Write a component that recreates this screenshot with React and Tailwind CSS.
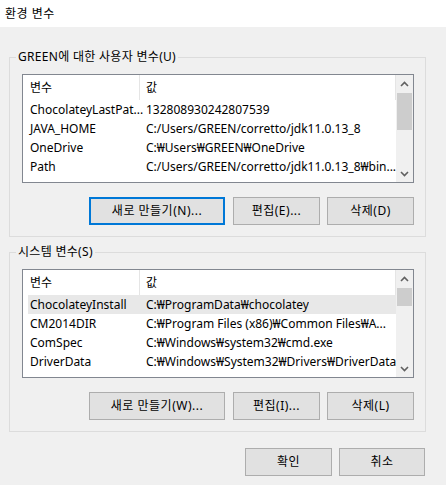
import React from "react";

const userVars = [
  { name: "ChocolateyLastPat...", value: "132808930242807539" },
  { name: "JAVA_HOME", value: "C:/Users/GREEN/corretto/jdk11.0.13_8" },
  { name: "OneDrive", value: "C:₩Users₩GREEN₩OneDrive" },
  { name: "Path", value: "C:/Users/GREEN/corretto/jdk11.0.13_8₩bin..." },
];

const systemVars = [
  { name: "ChocolateyInstall", value: "C:₩ProgramData₩chocolatey" },
  { name: "CM2014DIR", value: "C:₩Program Files (x86)₩Common Files₩A..." },
  { name: "ComSpec", value: "C:₩Windows₩system32₩cmd.exe" },
  { name: "DriverData", value: "C:₩Windows₩System32₩Drivers₩DriverData" },
];

const Chevron = ({ down }) => (
  <svg width="9" height="6" viewBox="0 0 9 6" className={down ? "rotate-180" : ""}>
    <path d="M1 5 L4.5 1.5 L8 5" fill="none" stroke="#606060" strokeWidth="1.6" />
  </svg>
);

const Button = ({ children, focused, className = "" }) => (
  <button
    className={`h-[28px] bg-[#e1e1e1] text-[12px] tracking-[0.5px] text-black flex items-center justify-center ${
      focused ? "border-2 border-[#0078d7]" : "border border-[#adadad]"
    } ${className}`}
  >
    {children}
  </button>
);

const VarList = ({ rows, thumbTop, thumbHeight, selected }) => (
  <div className="h-[109px] w-[392px] border border-[#828790] bg-white flex overflow-hidden">
    <div className="flex-1 flex flex-col overflow-hidden">
      {/* header */}
      <div className="h-[25px] shrink-0 flex items-center border-r border-[#e5e5e5]">
        <div className="w-[117px] h-full pl-[7px] flex items-center border-r border-[#e5e5e5]">변수</div>
        <div className="pl-[6px]">값</div>
      </div>
      {rows.map((r, i) => (
        <div
          key={r.name}
          className={`h-[19px] shrink-0 ml-[5px] flex items-center whitespace-nowrap ${
            selected === i ? "bg-[#e8e8e8]" : ""
          }`}
        >
          <div className="w-[116px] pl-[2px] overflow-hidden">{r.name}</div>
          <div className="pl-[2px] overflow-hidden">{r.value}</div>
        </div>
      ))}
    </div>
    {/* scrollbar */}
    <div className="w-[17px] bg-[#f0f0f0] flex flex-col">
      <div className="h-[17px] flex items-center justify-center">
        <Chevron />
      </div>
      <div className="mx-[1px] bg-[#cdcdcd]" style={{ marginTop: thumbTop, height: thumbHeight }} />
      <div className="flex-1" />
      <div className="h-[17px] flex items-center justify-center">
        <Chevron down />
      </div>
    </div>
  </div>
);

const Group = ({ label, children, className = "" }) => (
  <fieldset className={`w-[417px] border border-[#dcdcdc] ${className}`}>
    <legend className="ml-[6px] px-[2px] leading-[16px] tracking-[0.3px]">{label}</legend>
    <div className="pt-[9px] pl-[12px] pr-[11px] pb-[11px]">{children}</div>
  </fieldset>
);

export default function App() {
  return (
    <div
      className="w-[446px] h-[485px] bg-[#f0f0f0] text-[12px] text-black overflow-hidden"
      style={{ fontFamily: '"Noto Sans", "Noto Sans CJK KR", sans-serif' }}
    >
      {/* Title bar */}
      <div className="h-[27px] bg-white pl-[5px] flex items-center text-[12px] tracking-[0.5px]">환경 변수</div>

      <div className="px-[9px] pt-[22px]">
        <Group label="GREEN에 대한 사용자 변수(U)">
          <VarList rows={userVars} thumbTop={1} thumbHeight={37} />
          <div className="flex mt-[14px]">
            <Button focused className="w-[136px] ml-[67px]">새로 만들기(N)...</Button>
            <Button className="w-[87px] ml-[8px]">편집(E)...</Button>
            <Button className="w-[87px] ml-[7px]">삭제(D)</Button>
          </div>
        </Group>

        <Group label="시스템 변수(S)" className="mt-[7px]">
          <VarList rows={systemVars} thumbTop={1} thumbHeight={18} selected={0} />
          <div className="flex mt-[14px]">
            <Button className="w-[136px] ml-[67px]">새로 만들기(W)...</Button>
            <Button className="w-[87px] ml-[8px]">편집(I)...</Button>
            <Button className="w-[87px] ml-[7px]">삭제(L)</Button>
          </div>
        </Group>

        {/* Dialog buttons */}
        <div className="flex justify-end w-[416px] mt-[16px]">
          <Button className="w-[87px]">확인</Button>
          <Button className="w-[86px] ml-[7px]">취소</Button>
        </div>
      </div>
    </div>
  );
}
